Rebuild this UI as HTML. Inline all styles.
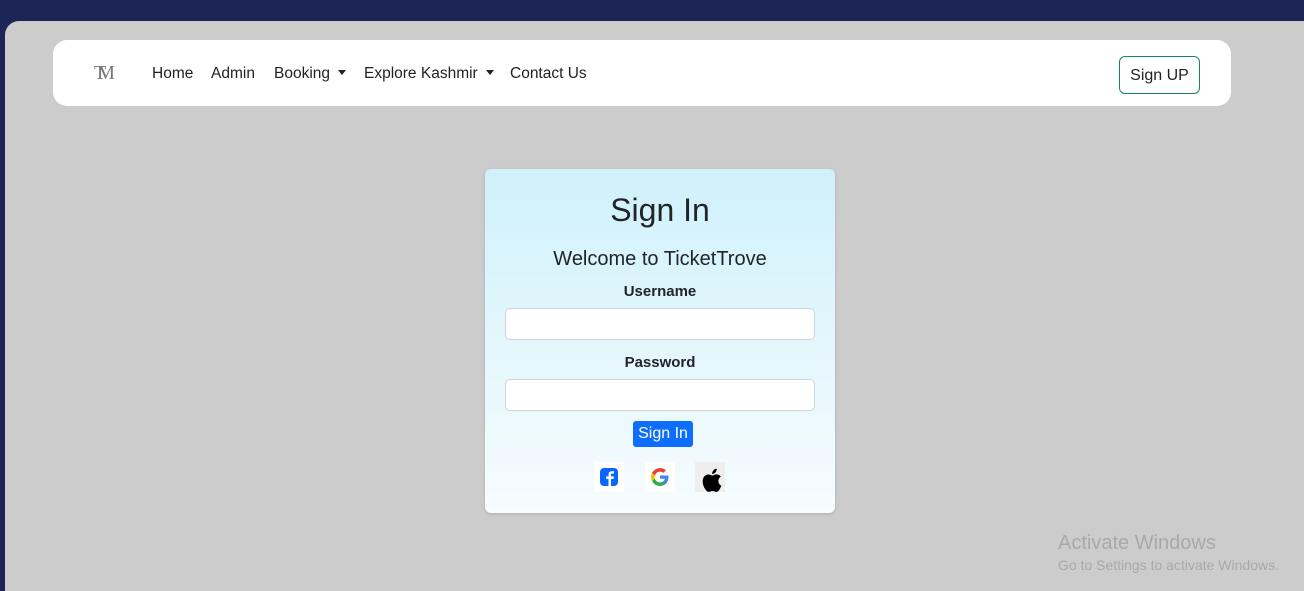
<!DOCTYPE html>
<html><head><style>
*{box-sizing:border-box;margin:0;padding:0}
body{width:1304px;height:579px;overflow:hidden;background:#1c2556;font-family:"Liberation Sans",sans-serif;position:relative}
.bg{position:absolute;left:5px;top:21px;width:1300px;height:570px;background:#cccccc;border-radius:14px 0 0 0}
.nav{position:absolute;left:53px;top:40px;width:1178px;height:66px;background:#fff;border-radius:14px}
.logo{position:absolute;left:94px;top:62px;font-family:"Liberation Serif",serif;font-size:20px;color:#777;letter-spacing:-9px}
.links{position:absolute;top:65px;font-size:15.5px;color:#222}
.caret{display:inline-block;width:0;height:0;border-left:4px solid transparent;border-right:4px solid transparent;border-top:5px solid #222;vertical-align:3px;margin-left:8px}
.su{position:absolute;left:1119px;top:56px;width:81px;height:38px;border:1px solid #198754;border-radius:6px;font-size:16px;color:#222;text-align:center;line-height:37px}
.card{position:absolute;left:485px;top:169px;width:350px;height:344px;border-radius:6px;background:linear-gradient(#cff1fb,#f7fcfe);box-shadow:0 1px 3px rgba(0,0,0,.15);text-align:center;color:#212529}
h1{position:absolute;top:23px;width:100%;font-size:32px;font-weight:normal}
h2{position:absolute;top:79px;width:100%;font-size:20px;font-weight:normal}
.lb{position:absolute;width:100%;font-size:15px;font-weight:bold}
.in{position:absolute;left:20px;width:310px;height:32px;background:#fff;border:1px solid #ced4da;border-radius:5px}
.btn{position:absolute;left:148px;top:252px;width:60px;height:26px;background:#0d6efd;color:#fff;border-radius:3px;font-size:16px;line-height:26px}
.ic{position:absolute;top:293px;width:30px;height:30px}
</style></head><body>
<div class="bg"></div>
<div class="nav"></div>
<div class="logo">TM</div>
<div class="links" style="left:152px">Home</div>
<div class="links" style="left:211px">Admin</div>
<div class="links" style="left:274px">Booking<i class="caret"></i></div>
<div class="links" style="left:364px">Explore Kashmir<i class="caret"></i></div>
<div class="links" style="left:510px">Contact Us</div>
<div class="su">Sign UP</div>
<div class="card">
<h1>Sign In</h1>
<h2>Welcome to TicketTrove</h2>
<div class="lb" style="top:114px">Username</div>
<div class="in" style="top:139px"></div>
<div class="lb" style="top:185px">Password</div>
<div class="in" style="top:210px"></div>
<div class="btn">Sign In</div>
<div class="ic" style="left:109px;background:#fff"><svg width="30" height="30"><rect x="6" y="6" width="18" height="18" rx="4" fill="#0866ff"/><path d="M17 24v-7h2.5l.4-2.6H17v-1.6c0-.8.3-1.3 1.4-1.3H20V9.3c-.3 0-1.2-.1-2.1-.1-2.1 0-3.4 1.2-3.4 3.5v1.7h-2.3V17h2.3v7z" fill="#fff"/></svg></div>
<div class="ic" style="left:160px;background:#fff"><svg width="30" height="30" viewBox="0 0 30 30"><path d="M23.5 15.2c0-.6-.1-1.2-.2-1.7H15v3.3h4.8a4 4 0 0 1-1.8 2.7v2.2h2.9c1.6-1.5 2.6-3.8 2.6-6.5z" fill="#4285f4"/><path d="M15 24c2.4 0 4.4-.8 5.9-2.2L18 19.5c-.8.5-1.8.9-3 .9-2.3 0-4.3-1.6-5-3.7H7v2.3A9 9 0 0 0 15 24z" fill="#34a853"/><path d="M10 16.7a5.4 5.4 0 0 1 0-3.4V11H7a9 9 0 0 0 0 8z" fill="#fbbc05"/><path d="M15 9.6c1.3 0 2.5.5 3.4 1.3l2.6-2.6A9 9 0 0 0 7 11l3 2.3c.7-2.1 2.7-3.7 5-3.7z" fill="#ea4335"/></svg></div>
<div class="ic" style="left:210px;background:#eee"><svg width="30" height="30" viewBox="0 0 30 30"><g transform="translate(-3.5 -1.5) scale(1.25)"><path d="M21.5 16.4c0-2.3 1.9-3.4 2-3.5-1.1-1.6-2.8-1.8-3.4-1.8-1.4-.1-2.8.9-3.5.9s-1.9-.9-3.1-.8c-1.6 0-3 .9-3.8 2.3-1.6 2.8-.4 7 1.2 9.3.8 1.1 1.7 2.4 2.9 2.3 1.1 0 1.6-.7 3-.7s1.8.7 3 .7c1.3 0 2.1-1.1 2.8-2.3.9-1.3 1.3-2.6 1.3-2.6s-2.4-1-2.4-3.8zM19.2 9.5c.6-.8 1.1-1.9 1-3-.9 0-2.1.6-2.7 1.4-.6.7-1.1 1.8-1 2.9 1 .1 2.1-.5 2.7-1.3z" fill="#000"/></g></svg></div>
</div>
<div style="position:absolute;left:1058px;top:532px;color:#a9a9a9;font-size:20px">Activate Windows</div>
<div style="position:absolute;left:1058px;top:557px;color:#a9a9a9;font-size:14px">Go to Settings to activate Windows.</div>
</body></html>
